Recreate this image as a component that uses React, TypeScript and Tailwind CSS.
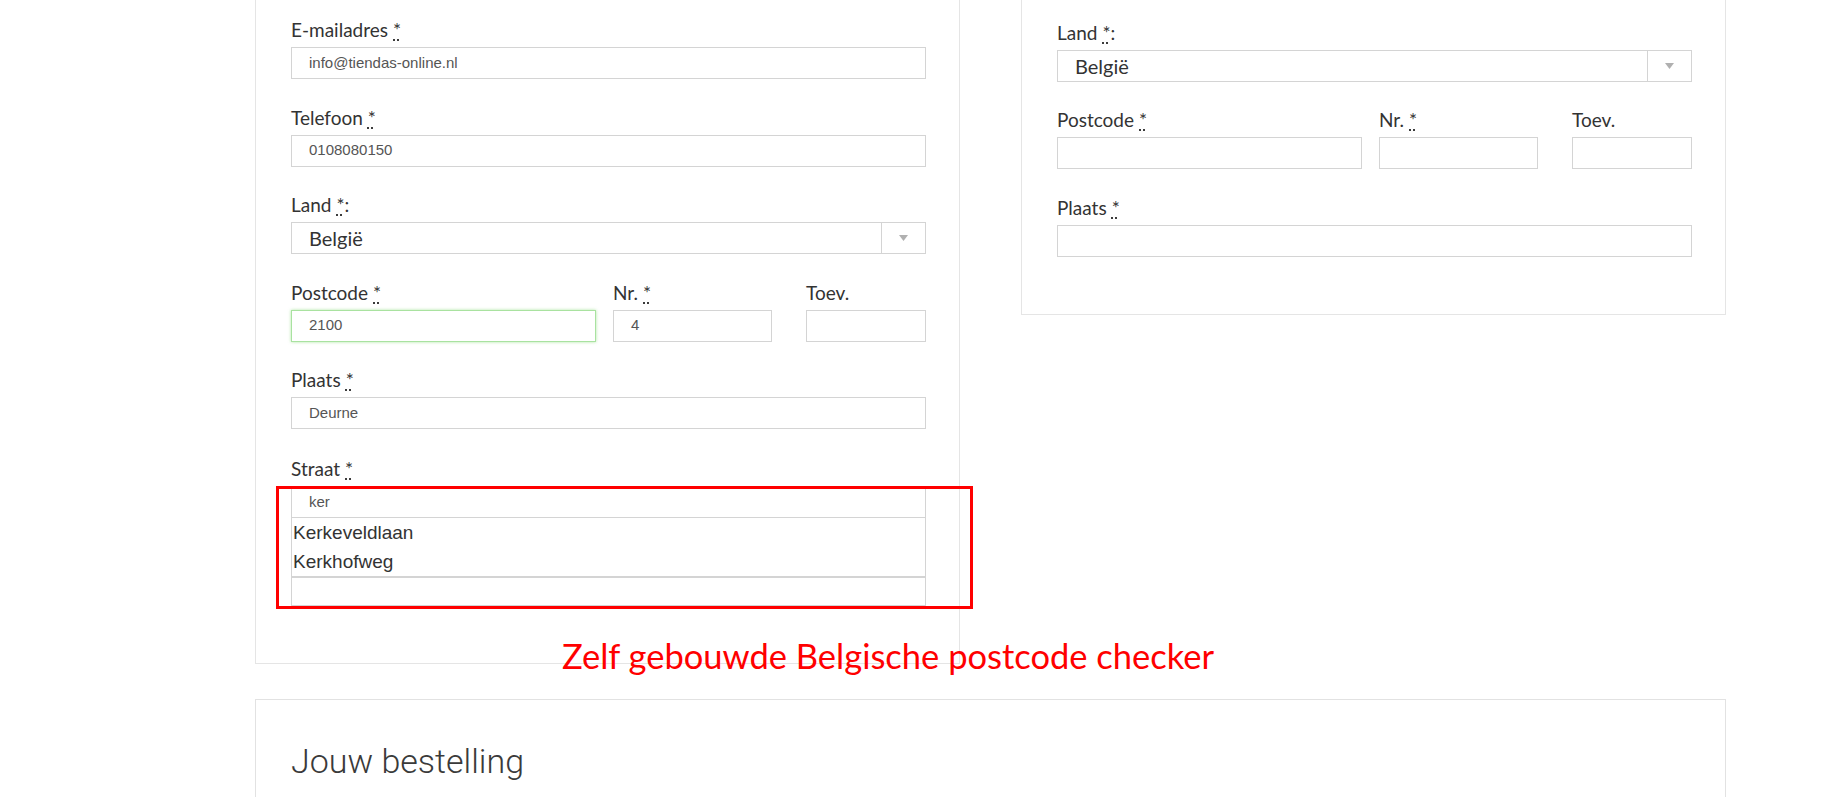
import React from "react";

const lato = "font-['Lato','Noto_Sans',sans-serif]";
const arial = "font-['Liberation_Sans',Arial,sans-serif]";

function Req() {
  return (
    <span className="ml-[5px] underline decoration-dotted decoration-[#333] underline-offset-[3px]">*</span>
  );
}

function Label({ children, className = "" }: { children: React.ReactNode; className?: string }) {
  return (
    <div className={`h-[26px] leading-[26px] mb-[4px] text-[19px] text-[#333] whitespace-nowrap ${lato} ${className}`}>
      {children}
    </div>
  );
}

function Input({ value = "", green = false }: { value?: string; green?: boolean }) {
  return (
    <div
      className={`h-8 w-full bg-white border pl-[17px] flex items-center text-[15px] text-[#555] ${arial} ${
        green ? "border-[#a9e2a0] shadow-[0_0_3px_rgba(110,210,90,0.55)]" : "border-[#d4d4d4]"
      }`}
    >
      {value}
    </div>
  );
}

function Select() {
  return (
    <div className="h-8 w-full flex border border-[#d4d4d4] bg-white">
      <div className={`flex-1 pl-[17px] flex items-center text-[20px] text-[#333] ${lato}`}>België</div>
      <div className="w-[44px] border-l border-[#d4d4d4] flex items-center justify-center">
        <svg width="9" height="6" viewBox="0 0 9 6">
          <polygon points="0,0 9,0 4.5,6" fill="#b0b0b0" />
        </svg>
      </div>
    </div>
  );
}

function PostcodeRow({ pc = "", nr = "", green = false }: { pc?: string; nr?: string; green?: boolean }) {
  return (
    <div className="flex mb-[25.5px]">
      <div className="w-[305px]">
        <Label>
          Postcode<Req />
        </Label>
        <Input value={pc} green={green} />
      </div>
      <div className="w-[159px] ml-[17px]">
        <Label>
          Nr.<Req />
        </Label>
        <Input value={nr} />
      </div>
      <div className="w-[120px] ml-auto">
        <Label>Toev.</Label>
        <Input />
      </div>
    </div>
  );
}

export default function App() {
  return (
    <div className="relative w-[1833px] h-[797px] overflow-hidden bg-white">
      <div className="ml-[255px] w-[1471px]">
        <div className="flex items-start gap-[61px]">
          {/* Left panel */}
          <div className="w-[705px] border-x border-b border-[#e5e5e5] pt-[17px] pl-[35px] pr-[33px] pb-[57px]">
            <div className="mb-[25.5px]">
              <Label>
                E-mailadres<Req />
              </Label>
              <Input value="info@tiendas-online.nl" />
            </div>
            <div className="mb-[25.5px]">
              <Label>
                Telefoon<Req />
              </Label>
              <Input value="0108080150" />
            </div>
            <div className="mb-[25.5px]">
              <Label>
                Land<Req />:
              </Label>
              <Select />
            </div>
            <PostcodeRow pc="2100" nr="4" green />
            <div className="mb-[27px]">
              <Label>
                Plaats<Req />
              </Label>
              <Input value="Deurne" />
            </div>
            <div>
              <Label>
                Straat<Req />
              </Label>
              <Input value="ker" />
              <div className={`border-x border-b-2 border-[#d4d4d4] text-[19px] text-[#333] pl-[1px] ${arial}`}>
                <div className="h-[29px] leading-[29px]">Kerkeveldlaan</div>
                <div className="h-[29px] leading-[29px]">Kerkhofweg</div>
              </div>
              <div className="h-[28px] border-x border-b border-[#d4d4d4]" />
            </div>
          </div>

          {/* Right panel */}
          <div className="w-[705px] border-x border-b border-[#e5e5e5] pt-[19.5px] pl-[35px] pr-[33px] pb-[57px]">
            <div className="mb-[25.5px]">
              <Label>
                Land<Req />:
              </Label>
              <Select />
            </div>
            <PostcodeRow />
            <div>
              <Label>
                Plaats<Req />
              </Label>
              <Input />
            </div>
          </div>
        </div>

        {/* Bottom panel */}
        <div className="mt-[35px] h-[200px] border-x border-t border-[#e2e2e2] pt-[42px] pl-[35px]">
          <div className="text-[34px] leading-[38px] font-light text-[#3a3a3a] font-['Roboto',sans-serif]">
            Jouw bestelling
          </div>
        </div>
      </div>

      {/* Annotation overlays */}
      <div className="absolute left-[276px] top-[486px] w-[697px] h-[123px] border-[3px] border-[#ff0000]" />
      <div className={`absolute left-[562px] top-[639px] text-[34.5px] leading-none text-[#ff0000] whitespace-nowrap ${lato}`}>
        Zelf gebouwde Belgische postcode checker
      </div>
    </div>
  );
}
